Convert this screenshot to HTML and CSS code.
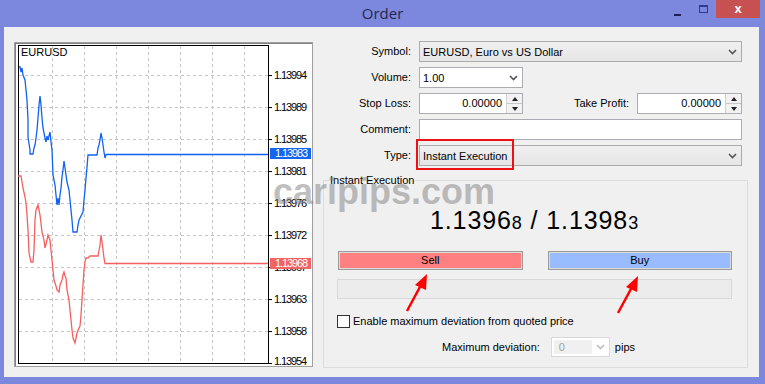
FILE: index.html
```html
<!DOCTYPE html>
<html lang="en">
<head>
  <meta charset="UTF-8">
  <title>Order</title>
  <link rel="stylesheet" href="styles.css">
</head>
<body>
  <div class="window">
    <div class="titlebar">
      <span></span>
      <span class="title">Order</span>
      <div class="controls">
        <span class="ctl"><i class="min-glyph"></i></span>
        <span class="ctl"><i class="max-glyph"></i></span>
        <span class="ctl close">x</span>
      </div>
    </div>

    <div class="client">
      <!-- tick chart -->
      <div class="chart-panel">
        <svg width="297" height="323" viewBox="0 0 297 323">
          <g transform="translate(-15 -43)">
            <g class="grid">
              <line x1="52.5" y1="46" x2="52.5" y2="363"/>
              <line x1="84.5" y1="46" x2="84.5" y2="363"/>
              <line x1="116.5" y1="46" x2="116.5" y2="363"/>
              <line x1="148.5" y1="46" x2="148.5" y2="363"/>
              <line x1="180.5" y1="46" x2="180.5" y2="363"/>
              <line x1="212.5" y1="46" x2="212.5" y2="363"/>
              <line x1="244.5" y1="46" x2="244.5" y2="363"/>
              <line x1="19" y1="75.5" x2="268" y2="75.5"/>
              <line x1="19" y1="107.5" x2="268" y2="107.5"/>
              <line x1="19" y1="139.5" x2="268" y2="139.5"/>
              <line x1="19" y1="171.5" x2="268" y2="171.5"/>
              <line x1="19" y1="203.5" x2="268" y2="203.5"/>
              <line x1="19" y1="235.5" x2="268" y2="235.5"/>
              <line x1="19" y1="267.5" x2="268" y2="267.5"/>
              <line x1="19" y1="299.5" x2="268" y2="299.5"/>
              <line x1="19" y1="331.5" x2="268" y2="331.5"/>
            </g>
            <rect class="frame" x="18.5" y="45.5" width="250" height="318"/>
            <g class="ticks">
              <line x1="268" y1="75.5" x2="272" y2="75.5"/>
              <line x1="268" y1="107.5" x2="272" y2="107.5"/>
              <line x1="268" y1="139.5" x2="272" y2="139.5"/>
              <line x1="268" y1="171.5" x2="272" y2="171.5"/>
              <line x1="268" y1="203.5" x2="272" y2="203.5"/>
              <line x1="268" y1="235.5" x2="272" y2="235.5"/>
              <line x1="268" y1="267.5" x2="272" y2="267.5"/>
              <line x1="268" y1="299.5" x2="272" y2="299.5"/>
              <line x1="268" y1="331.5" x2="272" y2="331.5"/>
              <line x1="268" y1="363.5" x2="272" y2="363.5"/>
            </g>
            <text class="sym" x="21" y="56">EURUSD</text>
            <g class="axis">
              <text x="274" y="79" textLength="33">1.13994</text>
              <text x="274" y="111" textLength="33">1.13989</text>
              <text x="274" y="143" textLength="33">1.13985</text>
              <text x="274" y="175" textLength="33">1.13981</text>
              <text x="274" y="207" textLength="33">1.13976</text>
              <text x="274" y="239" textLength="33">1.13972</text>
              <text x="274" y="271" textLength="33">1.13967</text>
              <text x="274" y="303" textLength="33">1.13963</text>
              <text x="274" y="335" textLength="33">1.13958</text>
              <text x="274" y="365" textLength="33">1.13954</text>
            </g>
            <polyline class="ask" points="19,67 20,67 21,72 22,68 23,75 25,80 26,90 27,100 28,120 28,137 30,150 30,154 33,154 34,148 35,145 36,138 37,130 38,118 39,105 40,96 41,105 42,118 43,128 45,138 46,142 47,136 48,140 50,132 51,142 52,150 53,175 55,185 56,195 57,205 58,198 59,205 60,195 61,188 62,177 63,170 64,161 65,168 66,175 67,182 69,190 70,200 71,210 72,220 73,232 77,232 78,225 79,220 83,212 84,200 85,190 86,178 87,167 88,155 97,155 98,148 99,145 100,140 101,133 102,138 103,145 104,152 105,158 106,154.5 268,154.5"/>
            <polyline class="bid" points="18,176 21,176 22,182 23,188 25,197 26,203 27,215 28,230 29,253 31,262 33,262 34,250 35,220 36,210 38,205 39,210 40,215 42,232 44,240 45,248 47,240 48,235 50,240 51,250 52,260 53,270 54,280 56,286 57,290 59,292 60,285 62,280 63,275 64,272 65,276 66,278 67,290 69,300 70,310 71,320 72,330 73,338 75,343 76,338 77,333 79,328 80,326 81,315 82,300 83,285 84,270 85,262 86,258 88,258 90,256 98,256 100,245 101,235 102,242 103,250 104,258 105,263.5 268,263.5"/>
            <rect class="ask-tag" x="270" y="148" width="41" height="11"/>
            <text class="tag-text" x="275" y="157" textLength="33">1.13983</text>
            <rect class="bid-tag" x="270" y="258" width="41" height="11"/>
            <text class="tag-text" x="275" y="267" textLength="33">1.13968</text>
          </g>
        </svg>
      </div>

      <div class="order-panel">
        <div class="form">
          <label>Symbol:</label>
          <div class="combo combo-ro">
            <span class="combo-text">EURUSD, Euro vs US Dollar</span>
            <svg class="chev" width="9" height="6" viewBox="0 0 9 6"><polyline points="1,1 4.5,4.5 8,1"/></svg>
          </div>

          <label>Volume:</label>
          <div class="line">
            <div class="combo combo-edit short">
              <span class="combo-text">1.00</span>
              <svg class="chev" width="9" height="6" viewBox="0 0 9 6"><polyline points="1,1 4.5,4.5 8,1"/></svg>
            </div>
          </div>

          <label>Stop Loss:</label>
          <div class="line">
            <div class="num short">
              <span class="num-val">0.00000</span>
              <span class="spin"><i class="up"></i><i class="down"></i></span>
            </div>
            <label class="tp-label">Take Profit:</label>
            <div class="num tp">
              <span class="num-val">0.00000</span>
              <span class="spin"><i class="up"></i><i class="down"></i></span>
            </div>
          </div>

          <label>Comment:</label>
          <div class="textbox"></div>

          <label>Type:</label>
          <div class="combo combo-ro">
            <span class="combo-text">Instant Execution</span>
            <svg class="chev" width="9" height="6" viewBox="0 0 9 6"><polyline points="1,1 4.5,4.5 8,1"/></svg>
            <span class="mark"></span>
          </div>
        </div>

        <fieldset class="group">
          <legend>Instant Execution</legend>
          <div class="quote">1.1396<small>8</small> / 1.1398<small>3</small></div>
          <div class="trade-btns">
            <div class="btn sell">Sell</div>
            <div class="btn buy">Buy</div>
          </div>
          <div class="status-bar"></div>
          <div class="check-row">
            <span class="checkbox"></span>
            <span>Enable maximum deviation from quoted price</span>
          </div>
          <div class="dev-row">
            <span>Maximum deviation:</span>
            <div class="combo combo-off">
              <span class="combo-text">0</span>
              <svg class="chev" width="9" height="6" viewBox="0 0 9 6"><polyline points="1,1 4.5,4.5 8,1"/></svg>
            </div>
            <span>pips</span>
          </div>
        </fieldset>
      </div>
    </div>

    <div class="watermark">caripips.com</div>

    <!-- annotation arrows -->
    <svg class="arrows" width="765" height="384" viewBox="0 0 765 384">
      <line x1="407" y1="311" x2="421" y2="285"/>
      <polygon points="427,274 415,285 426,290"/>
      <line x1="618" y1="313" x2="632" y2="287"/>
      <polygon points="638,276 626,287 637,292"/>
    </svg>
  </div>
</body>
</html>
```

FILE: styles.css
```css
body { margin: 0; background: #7c88de; font-family: "Liberation Sans", Arial, sans-serif; font-size: 11px; color: #000; }
.window { position: relative; width: 765px; height: 384px; background: #7c88de; overflow: hidden; }

.titlebar { height: 27px; display: grid; grid-template-columns: 1fr auto 1fr; align-items: start; }
.title { font-family: "Open Sans", sans-serif; font-size: 15px; color: #23264f; line-height: 26px; }
.controls { justify-self: end; display: flex; margin-right: 5px; }
.ctl { width: 26px; height: 18px; display: flex; justify-content: center; }
.min-glyph { width: 7px; height: 2px; background: #1c2054; margin-top: 14px; }
.max-glyph { width: 7px; height: 5px; border: 1px solid #2e3a8c; border-top-width: 2px; margin-top: 5px; }
.close { width: 44px; background: #c75050; color: #fff; font-weight: bold; font-size: 13px; line-height: 17px; justify-content: center; }

.client { background: #f0f0f0; height: 350px; margin: 0 6px 0 4px; display: flex; align-items: flex-start; }

.chart-panel { margin: 15px 0 0 10px; width: 297px; height: 323px; border: 1px solid #a0a0a0; box-shadow: inset 1px 1px #808080; background: #fff; }
.chart-panel svg { display: block; }
.grid line { stroke: #c4c4c4; stroke-width: 1; stroke-dasharray: 3 3; }
.frame { fill: none; stroke: #000; stroke-width: 1; }
.ticks line { stroke: #000; stroke-width: 1; }
.sym { font-family: "Liberation Sans", Arial, sans-serif; font-size: 11px; fill: #000; }
.axis text { font-family: "Liberation Sans", Arial, sans-serif; font-size: 11px; fill: #000; }
.ask { fill: none; stroke: #0f62f5; stroke-width: 1.3; }
.bid { fill: none; stroke: #f65f5f; stroke-width: 1.3; }
.ask-tag { fill: #1466f0; }
.bid-tag { fill: #f36363; }
.tag-text { font-family: "Liberation Sans", Arial, sans-serif; font-size: 11px; fill: #fff; }

.order-panel { flex: 1; padding: 14px 11px 0 10px; }

.form { display: grid; grid-template-columns: 88px 1fr; column-gap: 8px; row-gap: 5px; margin-right: 6px; }
.form label { text-align: right; line-height: 21px; }
.line { display: flex; align-items: center; }

.combo { position: relative; height: 21px; box-sizing: border-box; display: flex; align-items: center; border: 1px solid #acacac; }
.combo-ro { background: linear-gradient(#f0f0f0, #e5e5e5); }
.combo-edit { background: #fff; border-color: #abadb3; }
.combo-text { flex: 1; padding-left: 3px; white-space: nowrap; }
.chev { margin-right: 4px; }
.chev polyline { fill: none; stroke: #555; stroke-width: 1.6; }
.short { width: 104px; }

.num { height: 21px; box-sizing: border-box; display: flex; border: 1px solid #abadb3; background: #fff; }
.num-val { flex: 1; text-align: right; padding-right: 4px; line-height: 19px; }
.spin { width: 15px; display: flex; flex-direction: column; border-left: 1px solid #d0d0d0; }
.spin i { flex: 1; display: flex; justify-content: center; align-items: center; background: #f2f2f2; }
.spin i + i { border-top: 1px solid #c8c8c8; }
.spin i::after { content: ""; border-left: 3px solid transparent; border-right: 3px solid transparent; }
.spin .up::after { border-bottom: 4px solid #222; }
.spin .down::after { border-top: 4px solid #222; }
.form .tp-label { flex: 1; margin-right: 8px; }
.tp { width: 105px; }

.textbox { height: 21px; box-sizing: border-box; border: 1px solid #abadb3; background: #fff; }

.mark { position: absolute; left: -4px; top: -7px; width: 94px; height: 27px; border: 2px solid #ee1111; }

.group { margin: 7px 0 0; padding: 0 15px 10px 13px; border: 1px solid #dcdcdc; }
.group legend { padding: 0 1px; margin-left: -8px; line-height: 14px; }
.quote { text-align: center; font-size: 25px; letter-spacing: 0.9px; line-height: 30px; margin: 18px 0 13px; }
.quote small { font-size: 18px; }

.trade-btns { display: grid; grid-template-columns: 1fr 1fr; column-gap: 25px; padding-left: 1px; }
.btn { height: 19px; box-sizing: border-box; border: 1px solid #9a9a9a; box-shadow: inset 0 0 0 1px #dcdcdc; text-align: center; line-height: 17px; }
.sell { background: #ff8080; }
.buy { background: #99bbff; }

.status-bar { height: 20px; margin-top: 9px; box-sizing: border-box; border: 1px solid #d9d9d9; background: #ececec; }

.check-row { display: flex; align-items: center; gap: 3px; margin-top: 15px; height: 14px; }
.checkbox { width: 13px; height: 13px; box-sizing: border-box; border: 1px solid #333; background: #fff; }

.dev-row { display: flex; align-items: center; margin-top: 9px; padding-left: 105px; }
.combo-off { width: 59px; height: 20px; margin: 0 5px 0 11px; border-color: #d9d9d9; background: #fff; }
.combo-off .combo-text { color: #a0a0a0; background: #f0f0f0; margin: 2px 4px 2px 2px; padding-left: 5px; line-height: 14px; }
.combo-off .chev polyline { stroke: #bdbdbd; }

.watermark { position: absolute; left: 273px; top: 174px; font-family: "Liberation Sans", Arial, sans-serif; font-weight: bold; font-size: 36px; line-height: 36px; color: rgba(128, 128, 128, 0.5); pointer-events: none; }

.arrows { position: absolute; left: 0; top: 0; pointer-events: none; }
.arrows line { stroke: #ff0000; stroke-width: 2.5; }
.arrows polygon { fill: #ff0000; }
```
